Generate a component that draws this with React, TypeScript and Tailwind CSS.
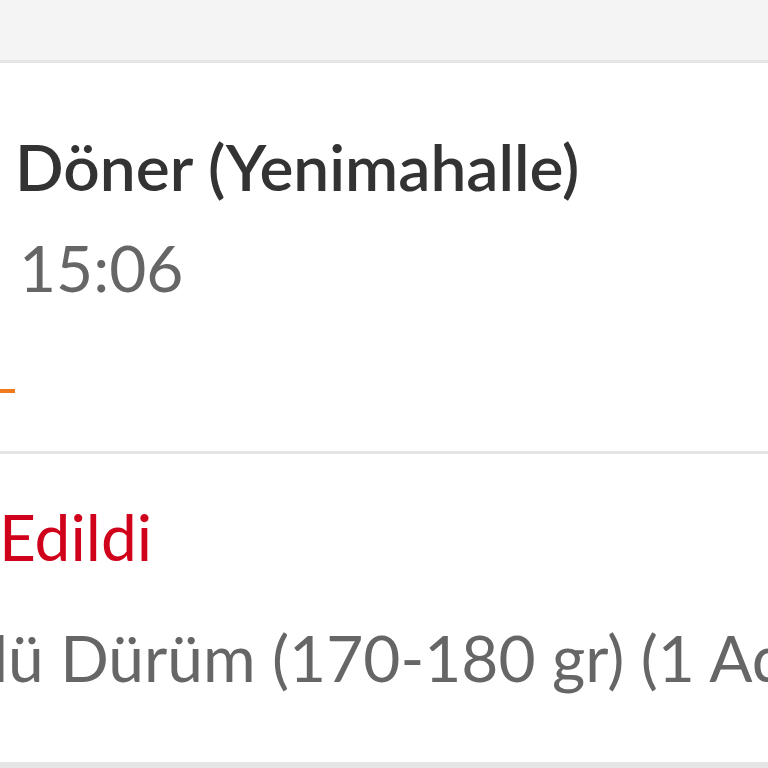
import React from 'react';

export default function App() {
  return (
    <div className="w-[768px] h-[768px] overflow-hidden bg-white font-['Lato','Noto_Sans',sans-serif]">
      {/* page header strip */}
      <div className="h-[63px] bg-[#f4f4f4] border-b-[3px] border-[#e5e5e5]" />

      {/* order summary */}
      <section className="pt-[72px] pb-[58px] border-b-[3px] border-[#e5e5e5]">
        <h1 className="pl-[15px] text-[64px] leading-none font-semibold text-[#333333] whitespace-nowrap">
          Döner (Yenimahalle)
        </h1>
        <p className="mt-[37px] pl-[19px] text-[64px] leading-none text-[#666666] whitespace-nowrap">
          15:06
        </p>
        <div className="mt-[89px] h-[4px] w-[15px] bg-[#f27a1a]" />
      </section>

      {/* order status + items */}
      <section className="pt-[51px] pb-[72px] border-b-[6px] border-[#e5e5e5]">
        <p className="-ml-[1px] text-[64px] leading-none text-[#d0021b] whitespace-nowrap">Edildi</p>
        <p className="mt-[57px] -ml-[7px] text-[64px] leading-none text-[#666666] whitespace-nowrap">
          lü Dürüm (170-180 gr) (1 Adet)
        </p>
      </section>
    </div>
  );
}
